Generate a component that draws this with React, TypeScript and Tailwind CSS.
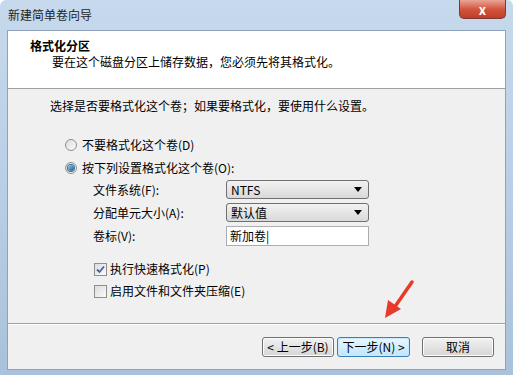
import { useState } from 'react';

const font = "font-['Noto_Sans_CJK_SC','Noto_Sans',sans-serif]";

function Radio({ checked }: { checked: boolean }) {
  return (
    <span className="relative flex h-[12px] w-[12px] items-center justify-center rounded-full border border-[#8e8f8f] bg-gradient-to-br from-[#dcdcdc] to-[#fbfbfb]">
      {checked && (
        <span className="h-[6px] w-[6px] rounded-full bg-gradient-to-br from-[#8ad2f5] to-[#1c5a8b] shadow-[0_0_0_1px_#3a6f96]" />
      )}
    </span>
  );
}

function Check({ checked }: { checked: boolean }) {
  return (
    <span className="flex h-[13px] w-[13px] items-center justify-center border border-[#8e8f8f] bg-gradient-to-br from-[#dcdcdc] to-[#fbfbfb]">
      {checked && (
        <svg width="9" height="9" viewBox="0 0 9 9">
          <path d="M1 4.5 L3.5 7 L8 1.5" fill="none" stroke="#4a5f97" strokeWidth="1.8" />
        </svg>
      )}
    </span>
  );
}

function Combo({ value }: { value: string }) {
  return (
    <div className="flex h-[19px] w-[143px] items-center justify-between rounded-[3px] border border-[#707070] bg-gradient-to-b from-[#f2f2f2] to-[#d9d9d9] pl-[4px] pr-[6px]">
      <span className="text-[12px] leading-none">{value}</span>
      <svg width="8" height="5" viewBox="0 0 8 5">
        <path d="M0 0 H8 L4 5 Z" fill="#000" />
      </svg>
    </div>
  );
}

function Btn({ label, focused }: { label: string; focused?: boolean }) {
  return (
    <div
      className={
        focused
          ? 'flex h-[20px] w-[73px] items-center justify-center rounded-[3px] border border-[#3c7fb1] bg-gradient-to-b from-[#eaf6fd] to-[#bee6fd] text-[12px] leading-none shadow-[inset_0_0_0_1px_#c6e9fc]'
          : 'flex h-[20px] w-[72px] items-center justify-center rounded-[3px] border border-[#707070] bg-gradient-to-b from-[#f2f2f2] to-[#d5d5d5] text-[12px] leading-none shadow-[inset_0_0_0_1px_#fcfcfc]'
      }
    >
      {label}
    </div>
  );
}

export default function App() {
  const [format] = useState(true);

  return (
    <div className={`relative flex h-[375px] w-[513px] flex-col overflow-hidden rounded-t-[6px] bg-gradient-to-b from-[#c7d9ec] via-[#b9cfe6] to-[#a9c1da] text-black ${font}`}>
      {/* title bar */}
      <div className="flex h-[30px] shrink-0 items-center justify-between pl-[8px]">
        <span className="text-[12px] leading-none text-[#1e1e1e]">新建简单卷向导</span>
        <div className="mr-[7px] flex h-[19px] w-[47px] items-center justify-center self-start rounded-b-[5px] border border-t-0 border-[#7a3a33] bg-gradient-to-b from-[#e8a596] via-[#d2553f] to-[#c23c24]">
          <span className="text-[13px] font-bold leading-none text-white">x</span>
        </div>
      </div>

      <div className="mx-[7px] flex flex-1 flex-col border border-[#8ea3ba]">
        {/* header */}
        <div className="h-[58px] shrink-0 border-b border-[#a0a0a0] bg-white pl-[22px] pt-[7px]">
          <div className="text-[12px] font-bold leading-[16px]">格式化分区</div>
          <div className="pl-[22px] text-[12px] leading-[16px]">要在这个磁盘分区上储存数据，您必须先将其格式化。</div>
        </div>

        {/* body */}
        <div className="flex flex-1 flex-col bg-[#f0f0f0]">
          <div className="pl-[42px] pt-[9px] text-[12px] leading-[16px]">
            选择是否要格式化这个卷；如果要格式化，要使用什么设置。
          </div>

          <div className="mt-[19px] flex flex-col pl-[57px]">
            <div className="flex h-[23px] items-center gap-[5px]">
              <Radio checked={!format} />
              <span className="text-[12px] leading-none">不要格式化这个卷(D)</span>
            </div>
            <div className="flex h-[23px] items-center gap-[5px]">
              <Radio checked={format} />
              <span className="text-[12px] leading-none">按下列设置格式化这个卷(O):</span>
            </div>

            <div className="ml-[28px] mt-[1px] grid grid-cols-[133px_1fr] gap-y-[4px]">
              <span className="self-center text-[12px] leading-none">文件系统(F):</span>
              <Combo value="NTFS" />
              <span className="self-center text-[12px] leading-none">分配单元大小(A):</span>
              <Combo value="默认值" />
              <span className="self-center text-[12px] leading-none">卷标(V):</span>
              <div className="flex h-[20px] w-[143px] items-center border border-[#abadb3] bg-white pl-[3px] text-[12px] leading-none">
                新加卷|
              </div>
            </div>

            <div className="ml-[29px] mt-[12px] flex flex-col">
              <div className="flex h-[22px] items-center gap-[3px]">
                <Check checked />
                <span className="text-[12px] leading-none">执行快速格式化(P)</span>
              </div>
              <div className="flex h-[22px] items-center gap-[3px]">
                <Check checked={false} />
                <span className="text-[12px] leading-none">启用文件和文件夹压缩(E)</span>
              </div>
            </div>
          </div>

          <div className="mt-auto border-t border-[#a0a0a0] shadow-[inset_0_1px_0_#ffffff]">
            <div className="flex h-[45px] items-center justify-end pr-[11px]">
              <Btn label="< 上一步(B)" />
              <div className="ml-[3px]">
                <Btn label="下一步(N) >" focused />
              </div>
              <div className="ml-[12px]">
                <Btn label="取消" />
              </div>
            </div>
          </div>
        </div>
      </div>
      <div className="h-[5px] shrink-0" />

      {/* annotation arrow */}
      <svg className="absolute left-[378px] top-[278px]" width="40" height="44" viewBox="0 0 40 44">
        <path d="M34 4 L16 30" stroke="#e8392a" strokeWidth="3.5" strokeLinecap="round" />
        <path d="M7 40 L10 22 L23 31 Z" fill="#e8392a" />
      </svg>
    </div>
  );
}
